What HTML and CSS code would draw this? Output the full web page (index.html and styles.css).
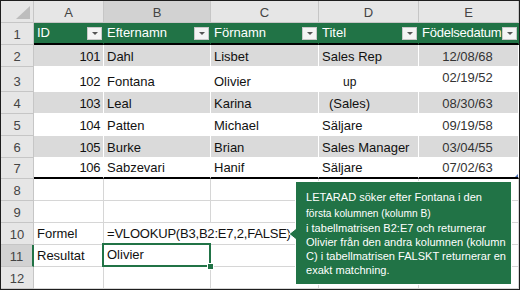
FILE: index.html
```html
<!DOCTYPE html>
<html lang="sv">
<head>
<meta charset="utf-8">
<title>LETARAD</title>
<link rel="stylesheet" href="styles.css">
</head>
<body>
<div class="sheet">
  <div class="cell corner"><svg width="16" height="14" viewBox="0 0 16 14"><polygon points="15,0 15,13 1,13" fill="#bdbdbd"/></svg></div>
  <div class="cell ch">A</div>
  <div class="cell ch sel">B</div>
  <div class="cell ch">C</div>
  <div class="cell ch">D</div>
  <div class="cell ch">E</div>

  <div class="cell rh">1</div>
  <div class="cell th"><span class="lbl">ID</span><span class="fb"></span></div>
  <div class="cell th"><span class="lbl">Efternamn</span><span class="fb"></span></div>
  <div class="cell th"><span class="lbl">Förnamn</span><span class="fb"></span></div>
  <div class="cell th"><span class="lbl">Titel</span><span class="fb"></span></div>
  <div class="cell th"><span class="lbl tight">Födelsedatum</span><span class="fb"></span></div>

  <div class="cell rh">2</div>
  <div class="cell g num">101</div>
  <div class="cell g">Dahl</div>
  <div class="cell g">Lisbet</div>
  <div class="cell g">Sales Rep</div>
  <div class="cell g date">12/08/68</div>

  <div class="cell rh">3</div>
  <div class="cell w num">102</div>
  <div class="cell w">Fontana</div>
  <div class="cell w">Olivier</div>
  <div class="cell w up">up</div>
  <div class="cell w date hi">02/19/52</div>

  <div class="cell rh">4</div>
  <div class="cell g num">103</div>
  <div class="cell g">Leal</div>
  <div class="cell g">Karina</div>
  <div class="cell g ind">(Sales)</div>
  <div class="cell g date">08/30/63</div>

  <div class="cell rh">5</div>
  <div class="cell w num">104</div>
  <div class="cell w">Patten</div>
  <div class="cell w">Michael</div>
  <div class="cell w">Säljare</div>
  <div class="cell w date">09/19/58</div>

  <div class="cell rh">6</div>
  <div class="cell g num">105</div>
  <div class="cell g">Burke</div>
  <div class="cell g">Brian</div>
  <div class="cell g">Sales Manager</div>
  <div class="cell g date">03/04/55</div>

  <div class="cell rh">7</div>
  <div class="cell w last num">106</div>
  <div class="cell w last">Sabzevari</div>
  <div class="cell w last">Hanif</div>
  <div class="cell w last">Säljare</div>
  <div class="cell w last date handle">07/02/63</div>

  <div class="cell rh">8</div>
  <div class="cell e"></div><div class="cell e"></div><div class="cell e"></div><div class="cell e"></div><div class="cell e"></div>

  <div class="cell rh">9</div>
  <div class="cell e"></div><div class="cell e"></div><div class="cell e"></div><div class="cell e"></div><div class="cell e"></div>

  <div class="cell rh">10</div>
  <div class="cell e">Formel</div>
  <div class="cell e formula">=VLOOKUP(B3,B2:E7,2,FALSE)</div>
  <div class="cell e"></div><div class="cell e"></div>

  <div class="cell rh selrow">11</div>
  <div class="cell e">Resultat</div>
  <div class="cell e active">Olivier</div>
  <div class="cell e"></div><div class="cell e"></div><div class="cell e"></div>

  <div class="cell rh">12</div>
  <div class="cell e"></div><div class="cell e"></div><div class="cell e"></div><div class="cell e"></div><div class="cell e"></div>

  <div class="callout">
    <svg class="pointer" width="8" height="12" viewBox="0 0 8 12"><polygon points="8,0.5 1,6 8,11.5" fill="#217346" stroke="#ffffff" stroke-width="1"/><rect x="7" y="1.5" width="2" height="9" fill="#217346"/></svg>
    <div class="line l1">LETARAD söker efter Fontana i den</div>
    <div class="line l2">första kolumnen (kolumn B)</div>
    <div class="line">i tabellmatrisen B2:E7 och returnerar</div>
    <div class="line">Olivier från den andra kolumnen (kolumn</div>
    <div class="line">C) i tabellmatrisen FALSKT returnerar en</div>
    <div class="line">exakt matchning.</div>
  </div>
</div>
</body>
</html>
```

FILE: styles.css
```css
html, body {
  margin: 0;
  padding: 0;
  background: #ffffff;
}

.sheet {
  position: relative;
  display: grid;
  grid-template-columns: 33px 70px 107px 108px 100px 100px;
  grid-template-rows: 22px 22px 22px 25px 22px 22px 22px 21px 22px 22px 22px 22px 22px;
  width: max-content;
  border: 1px solid #1e1e1e;
  background: #ffffff;
  font-family: "Liberation Sans", Arial, sans-serif;
  font-size: 13px;
  color: #111;
}

.cell {
  box-sizing: border-box;
  display: flex;
  align-items: flex-end;
  padding: 0 3px 1px;
  line-height: 16px;
  white-space: nowrap;
  overflow: hidden;
  border-right: 1px solid #d6d6d6;
  border-bottom: 1px solid #d6d6d6;
}

.corner {
  background: #e6e6e6;
  border-color: #c6c6c6;
  padding: 0 2px 2px 0;
  justify-content: flex-end;
}

.ch {
  background: #e6e6e6;
  border-color: #c6c6c6;
  color: #444;
  justify-content: center;
  align-items: center;
  padding: 2px 0 0;
}

.ch.sel {
  background: #d2d2d2;
}

.rh {
  background: #e6e6e6;
  border-color: #c6c6c6;
  color: #444;
  justify-content: center;
  padding: 0 0 1px;
}

.rh.selrow {
  background: #d2d2d2;
  border-right: 2px solid #217346;
}

.th {
  background: #217346;
  color: #ffffff;
  border-right-color: #217346;
  border-bottom: 2px solid #000;
  align-items: center;
  padding: 0 1px 0 3px;
}

.th .lbl {
  flex: 1;
  overflow: hidden;
}

.th .lbl.tight {
  letter-spacing: -0.25px;
}

.fb {
  flex: none;
  box-sizing: border-box;
  width: 15px;
  height: 13px;
  background: #f4f4f4;
  border: 1px solid #c9c9c9;
  display: flex;
  align-items: center;
  justify-content: center;
}

.fb::before {
  content: "";
  border-left: 3px solid transparent;
  border-right: 3px solid transparent;
  border-top: 3px solid #555;
  margin-top: 1px;
}

.g {
  background: #dadada;
  border-color: #ffffff;
}

.w {
  background: #ffffff;
  border-color: #ffffff;
}

.last {
  border-bottom: 2px solid #000;
}

.num {
  justify-content: flex-end;
  letter-spacing: -0.4px;
}

.date {
  justify-content: center;
  color: #333;
  padding-right: 5px;
}

.hi {
  padding-bottom: 5px;
}

.up {
  padding-left: 24px;
  font-size: 12px;
}

.ind {
  padding-left: 10px;
}

.handle {
  position: relative;
}

.handle::after {
  content: "";
  position: absolute;
  right: 0;
  bottom: 0;
  border-left: 3px solid transparent;
  border-bottom: 3px solid #4a6fb3;
}

.e {
  padding-bottom: 2px;
}

.formula {
  grid-column: span 2;
  overflow: visible;
  letter-spacing: -0.2px;
}

.active {
  position: relative;
  overflow: visible;
  align-items: flex-start;
  padding-top: 2px;
}

.active::after {
  content: "";
  position: absolute;
  top: -2px;
  left: -2px;
  right: -1px;
  bottom: -1px;
  border: 2px solid #217346;
  z-index: 2;
}

.active::before {
  content: "";
  position: absolute;
  right: -4px;
  bottom: -4px;
  width: 5px;
  height: 5px;
  background: #217346;
  border: 1px solid #ffffff;
  z-index: 3;
}

.callout {
  position: absolute;
  left: 295px;
  top: 181px;
  width: 215px;
  height: 102px;
  box-sizing: border-box;
  background: #217346;
  color: #ffffff;
  padding: 8px 0 0 10px;
  font-size: 11.05px;
  line-height: 14px;
  box-shadow: 0 0 0 1px #ffffff;
  z-index: 5;
}

.pointer {
  position: absolute;
  left: -8px;
  top: 46px;
}

.line {
  white-space: nowrap;
}

.l1 {
  margin-bottom: 3px;
}

.l2 {
  font-size: 10.2px;
}
```
